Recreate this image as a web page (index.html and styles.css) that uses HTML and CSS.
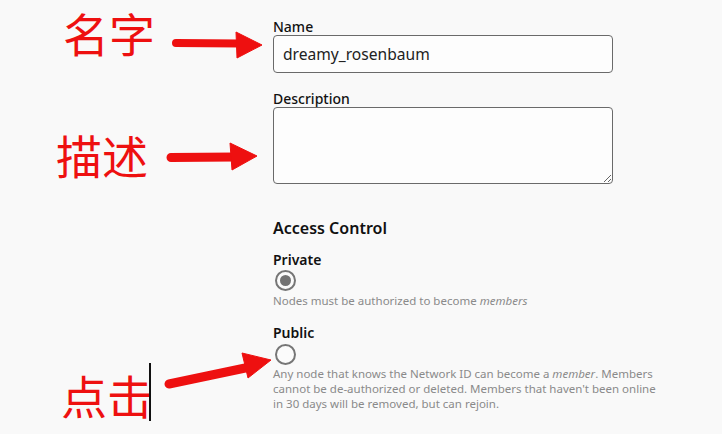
FILE: index.html
```html
<!DOCTYPE html>
<html lang="en">
<head>
<meta charset="utf-8">
<title>Network settings</title>
<link rel="stylesheet" href="styles.css">
</head>
<body>
<main class="form">
  <label class="field-label" for="name">Name</label>
  <input id="name" class="text-input" type="text" value="dreamy_rosenbaum">

  <label class="field-label desc-label" for="desc">Description</label>
  <textarea id="desc" class="text-area"></textarea>

  <h2 class="section-title">Access Control</h2>

  <div class="option">
    <div class="option-label">Private</div>
    <span class="radio radio-checked"></span>
    <p class="option-help">Nodes must be authorized to become <em>members</em></p>
  </div>

  <div class="option option-public">
    <div class="option-label">Public</div>
    <span class="radio"></span>
    <p class="option-help">Any node that knows the Network ID can become a <em>member</em>. Members cannot be de-authorized or deleted. Members that haven't been online in 30 days will be removed, but can rejoin.</p>
  </div>
</main>

<div class="note note-name">名字</div>
<div class="note note-desc">描述</div>
<div class="note note-click">点击</div>

<svg class="overlay" width="722" height="434" viewBox="0 0 722 434" aria-hidden="true">
  <g fill="#ee1010" stroke="#ee1010">
    <line x1="176" y1="43" x2="240" y2="43.5" stroke-width="8" stroke-linecap="round"/>
    <polygon points="236,32 262,45 237,58" stroke-width="1" stroke-linejoin="round"/>
    <line x1="171" y1="157.5" x2="235" y2="157" stroke-width="9" stroke-linecap="round"/>
    <polygon points="230,143 257,156 232,170" stroke-width="1" stroke-linejoin="round"/>
    <line x1="169" y1="384" x2="250" y2="367" stroke-width="9" stroke-linecap="round"/>
    <polygon points="242,353 271,360 248,378" stroke-width="1" stroke-linejoin="round"/>
  </g>
  <line x1="150" y1="363" x2="150" y2="421" stroke="#111" stroke-width="2"/>
</svg>
</body>
</html>
```

FILE: styles.css
```css
html, body {
  margin: 0;
  padding: 0;
}

body {
  background: #f9f9f9;
  width: 722px;
  height: 434px;
  overflow: hidden;
  position: relative;
  font-family: "Noto Sans", "Open Sans", sans-serif;
  color: #141414;
}

.form {
  display: flex;
  flex-direction: column;
  align-items: flex-start;
  width: 340px;
  padding: 19px 0 0 273px;
}

.field-label {
  display: block;
  font-size: 14px;
  line-height: 16px;
  font-weight: 500;
  color: #121212;
}

.desc-label {
  margin-top: 18px;
}

.text-input,
.text-area {
  box-sizing: border-box;
  width: 340px;
  border: 1.5px solid #6a6a6a;
  border-radius: 4px;
  background: #fdfdfd;
  font-family: "Noto Sans", "Open Sans", sans-serif;
  color: #222;
  margin: 0;
}

.text-input {
  height: 38px;
  padding: 0 9px;
  font-size: 15.6px;
}

.text-area {
  height: 77px;
  resize: vertical;
}

.section-title {
  margin: 35px 0 0;
  font-size: 16px;
  line-height: 19px;
  font-weight: 600;
  color: #111;
}

.option {
  display: flex;
  flex-direction: column;
  align-items: flex-start;
  margin-top: 14px;
}

.option-public {
  margin-top: 17px;
}

.option-label {
  font-size: 14px;
  line-height: 16px;
  font-weight: 600;
  color: #111;
}

.radio {
  box-sizing: border-box;
  display: flex;
  align-items: center;
  justify-content: center;
  width: 21px;
  height: 21px;
  border: 2px solid #767676;
  border-radius: 50%;
  margin: 2px 0 2px 2px;
  background: #fbfbfb;
}

.option-public .radio {
  margin: 3px 0 1px 2px;
}

.radio-checked::after {
  content: "";
  width: 11px;
  height: 11px;
  border-radius: 50%;
  background: #737373;
}

.option-help {
  margin: 0;
  font-size: 11.5px;
  line-height: 15px;
  color: #8a8a8a;
  width: 395px;
}

.note {
  position: absolute;
  font-family: "Noto Sans CJK SC", sans-serif;
  font-size: 46px;
  line-height: 46px;
  color: #ee1010;
  letter-spacing: 0;
}

.note-name {
  left: 63px;
  top: 9px;
}

.note-desc {
  left: 56px;
  top: 131px;
}

.note-click {
  left: 61px;
  top: 371px;
}

.overlay {
  position: absolute;
  left: 0;
  top: 0;
  pointer-events: none;
}
```
